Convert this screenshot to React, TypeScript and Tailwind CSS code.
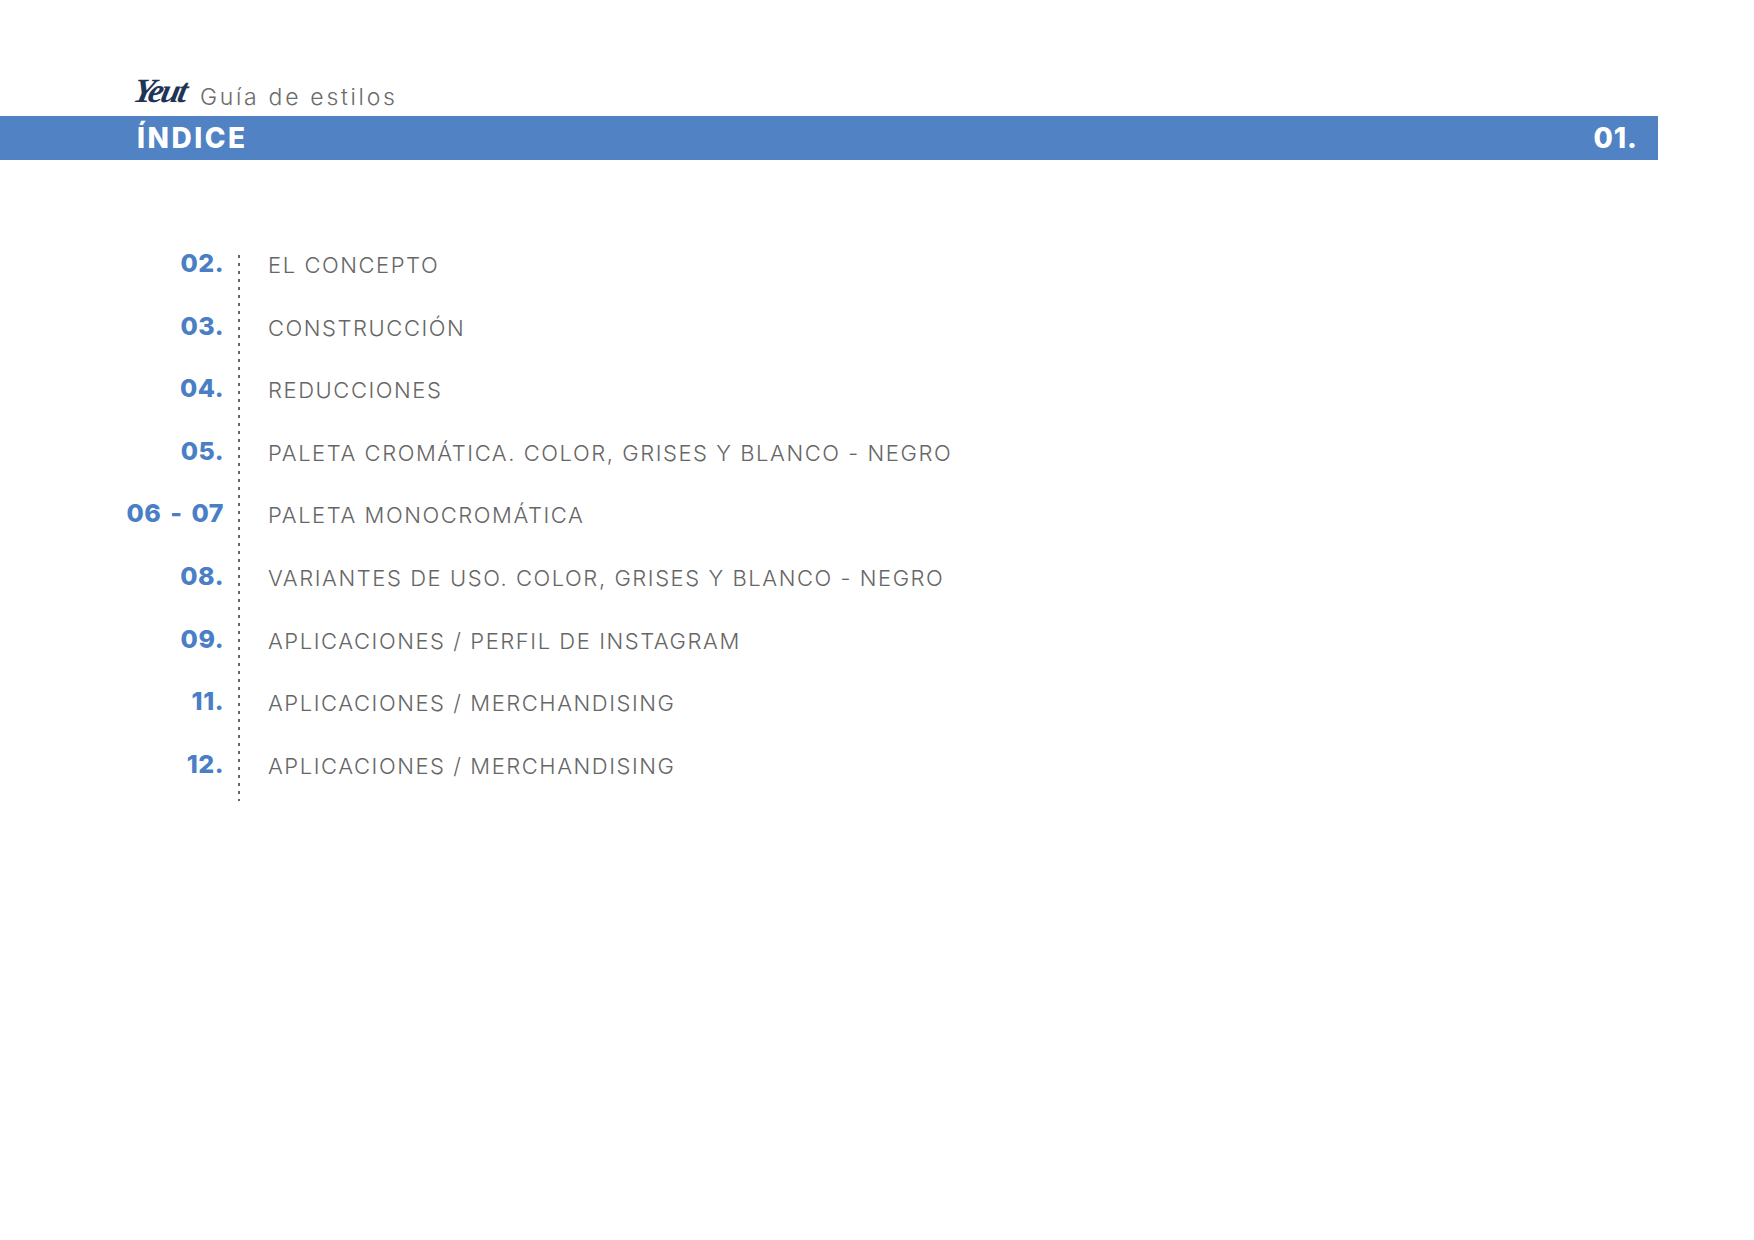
const rows = [
  { page: "02.", title: "EL CONCEPTO" },
  { page: "03.", title: "CONSTRUCCIÓN" },
  { page: "04.", title: "REDUCCIONES" },
  { page: "05.", title: "PALETA CROMÁTICA. COLOR, GRISES Y BLANCO - NEGRO" },
  { page: "06 - 07", title: "PALETA MONOCROMÁTICA" },
  { page: "08.", title: "VARIANTES DE USO. COLOR, GRISES Y BLANCO - NEGRO" },
  { page: "09.", title: "APLICACIONES / PERFIL DE INSTAGRAM" },
  { page: "11.", title: "APLICACIONES / MERCHANDISING" },
  { page: "12.", title: "APLICACIONES / MERCHANDISING" },
];

export default function App() {
  return (
    <div className="w-[1754px] h-[1240px] bg-white overflow-hidden font-['Inter',sans-serif]">
      {/* Header */}
      <div className="h-[116px] pl-[134px] flex items-end gap-[12px] pb-[5px]">
        <span className="w-[54px] font-['Liberation_Serif',serif] italic font-bold text-[34px] leading-[40px] tracking-[-2.2px] text-[#1f3557] -skew-x-12">
          Yeut
        </span>
        <span className="text-[23px] leading-[28px] font-light tracking-[2.7px] text-[#6b6b6b]">
          Guía de estilos
        </span>
      </div>
      <div className="w-[1658px] h-[44px] bg-[#5082c4] flex items-center justify-between pl-[137px] pr-[20px] text-white font-extrabold text-[28px] leading-[44px] tracking-[2.5px]">
        <span>ÍNDICE</span>
        <span className="tracking-[1px]">01.</span>
      </div>

      {/* Index */}
      <div className="mt-[95px] h-[546px] flex flex-col bg-[repeating-linear-gradient(to_bottom,#666666_0,#666666_3px,transparent_3px,transparent_8px)] bg-no-repeat bg-[length:2px_100%] bg-[position:238px_0]">
        {rows.map((row, i) => (
          <div key={i} className="flex h-[62.6px] shrink-0">
            <div className="w-[224px] text-right text-[#4a7fc5] font-extrabold text-[25px] leading-[30px] tracking-[0.5px] [word-spacing:3px] -mt-[7px] shrink-0">
              {row.page}
            </div>
            <div className="ml-[44px] text-[#666666] font-light text-[22px] leading-[30px] tracking-[1.56px] -mt-[5px]">
              {row.title}
            </div>
          </div>
        ))}
      </div>
    </div>
  );
}
